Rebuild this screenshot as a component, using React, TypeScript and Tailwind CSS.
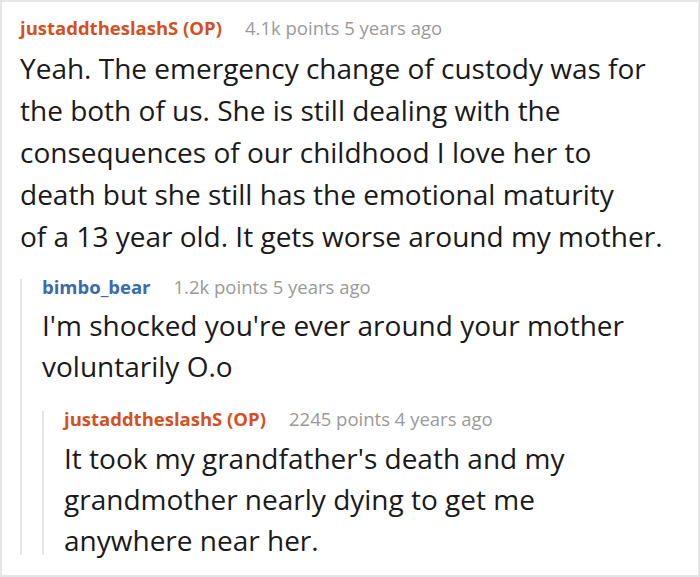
import React from "react";

const font = { fontFamily: '"Open Sans", "Noto Sans", sans-serif' };

function Header({
  name,
  color,
  meta,
  lh,
}: {
  name: string;
  color: string;
  meta: string;
  lh: string;
}) {
  return (
    <div className={`flex items-baseline gap-[23px] text-[18.5px] ${lh} whitespace-nowrap`}>
      <span className={`font-bold ${color}`}>{name}</span>
      <span className="text-[#9a9a9a]">{meta}</span>
    </div>
  );
}

export default function App() {
  return (
    <div
      className="w-[700px] h-[577px] bg-white border-2 border-[#e6e6e6] pl-[18px] pt-[14px] text-[#1a1a1a] overflow-hidden"
      style={font}
    >
      <Header
        name="justaddtheslashS (OP)"
        color="text-[#d5501e]"
        meta="4.1k points 5 years ago"
        lh="leading-[24px]"
      />
      <p className="mt-[7px] text-[28px] leading-[42px] w-[680px] whitespace-nowrap">
        Yeah. The emergency change of custody was for
        <br />
        the both of us. She is still dealing with the
        <br />
        consequences of our childhood I love her to
        <br />
        death but she still has the emotional maturity
        <br />
        of a 13 year old. It gets worse around my mother.
      </p>
      <div className="mt-[22px] flex flex-col border-l-2 border-[#e6e6e6] pl-[20px]">
        <Header name="bimbo_bear" color="text-[#3a6ab0]" meta="1.2k points 5 years ago" lh="leading-[16px]" />
        <p className="mt-[10px] text-[28px] leading-[41px] whitespace-nowrap">
          I'm shocked you're ever around your mother
          <br />
          voluntarily O.o
        </p>
        <div className="mt-[24px] flex flex-col border-l-2 border-[#e6e6e6] pl-[20px]">
          <Header
            name="justaddtheslashS (OP)"
            color="text-[#d5501e]"
            meta="2245 points 4 years ago"
            lh="leading-[16px]"
          />
          <p className="mt-[11px] -mb-[6px] text-[28px] leading-[41px] whitespace-nowrap">
            It took my grandfather's death and my
            <br />
            grandmother nearly dying to get me
            <br />
            anywhere near her.
          </p>
        </div>
      </div>
    </div>
  );
}
